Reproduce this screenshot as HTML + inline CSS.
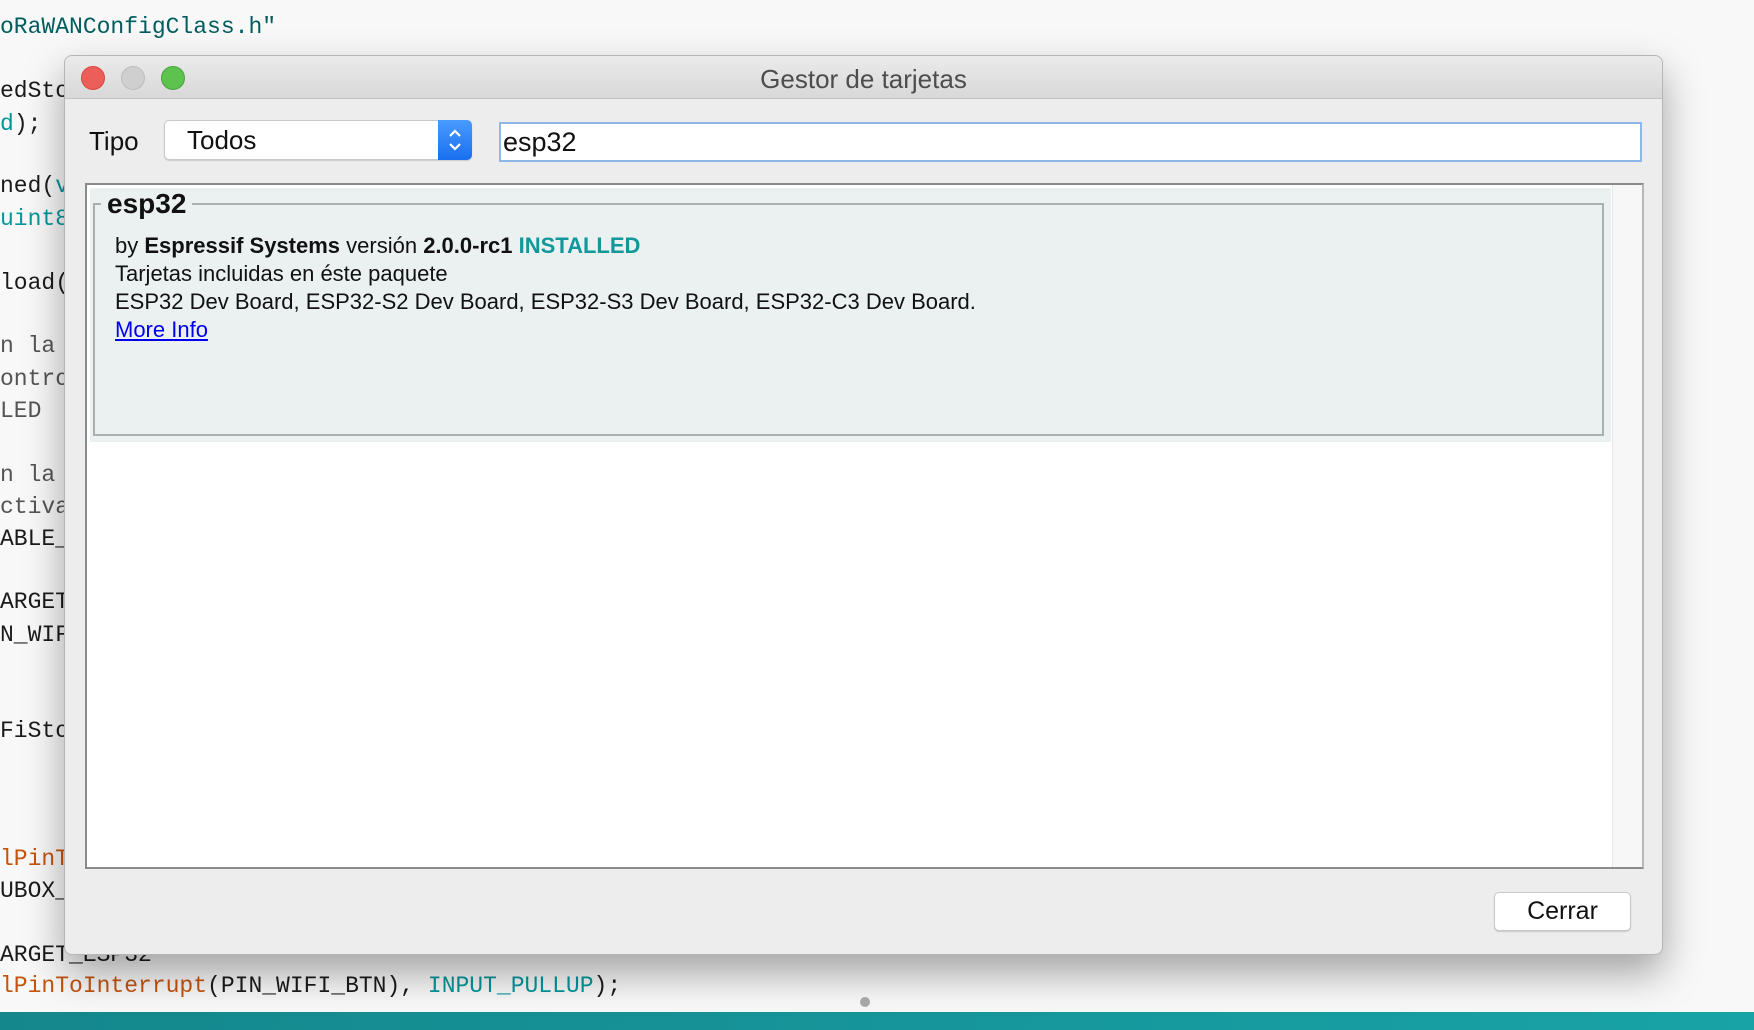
<!DOCTYPE html>
<html><head><meta charset="utf-8"><style>
*{margin:0;padding:0;box-sizing:border-box}
body{width:1754px;height:1030px;overflow:hidden;background:#f8f8f8;position:relative;font-family:"Liberation Sans",sans-serif}
.code{position:absolute;left:0;font-family:"Liberation Mono",monospace;font-size:23px;color:#1b1b1b;white-space:pre;line-height:32px}
.t{color:#005c5f}.o{color:#c4540e}.b{color:#00979c}
.teal{position:absolute;left:0;top:1012px;width:1754px;height:18px;background:linear-gradient(90deg,#14878c,#18a3a7)}
.dlg{position:absolute;left:64px;top:55px;width:1599px;height:900px;background:#ededed;border-radius:8px;border:1px solid #b5b5b5;box-shadow:0 18px 40px rgba(0,0,0,.35)}
.tb{position:absolute;left:0;top:0;right:0;height:43px;background:linear-gradient(#ebebeb,#d8d8d8);border-bottom:1px solid #c4c4c4;border-radius:8px 8px 0 0;text-align:center;font-size:26px;color:#4d4d4d;line-height:46px}
.l{position:absolute;top:10px;width:24px;height:24px;border-radius:50%}
.abs{position:absolute}
.ln{position:absolute;left:114px;font-size:22px;color:#111;white-space:nowrap}
</style></head><body>
<div class="code" style="top:11px"><span class="t">oRaWANConfigClass.h"</span></div>
<div class="code" style="top:75px">edSto</div>
<div class="code" style="top:108px"><span class="b">d</span>);</div>
<div class="code" style="top:170px">ned(<span class="b">v</span></div>
<div class="code" style="top:203px"><span class="b">uint8</span></div>
<div class="code" style="top:267px">load(</div>
<div class="code" style="top:330px;color:#555">n la</div>
<div class="code" style="top:363px;color:#555">ontro</div>
<div class="code" style="top:395px;color:#555">LED</div>
<div class="code" style="top:459px;color:#555">n la</div>
<div class="code" style="top:491px;color:#555">ctiva</div>
<div class="code" style="top:523px">ABLE_</div>
<div class="code" style="top:586px">ARGET</div>
<div class="code" style="top:619px">N_WIF</div>
<div class="code" style="top:715px">FiSto</div>
<div class="code" style="top:843px"><span class="o">lPinT</span></div>
<div class="code" style="top:875px">UBOX_</div>
<div class="code" style="top:939px">ARGET_ESP32</div>
<div class="code" style="top:970px"><span class="o">lPinToInterrupt</span>(PIN_WIFI_BTN), <span class="b">INPUT_PULLUP</span>);</div>
<div class="abs" style="left:860px;top:997px;width:10px;height:10px;border-radius:50%;background:#aaa"></div>
<div class="teal"></div>

<div class="dlg">
 <div class="tb">Gestor de tarjetas
  <div class="l" style="left:16px;background:#ec5f58;border:1px solid #d4473f"></div>
  <div class="l" style="left:56px;background:#cfcfcf;border:1px solid #bdbdbd"></div>
  <div class="l" style="left:96px;background:#5dc24e;border:1px solid #47a43a"></div>
 </div>
 <div class="abs" style="left:24px;top:70px;font-size:26px;color:#111">Tipo</div>
 <div class="abs" style="left:99px;top:64px;width:308px;height:40px;background:#fff;border:1px solid #c9c9c9;border-radius:5px;box-shadow:0 1px 1px rgba(0,0,0,.15)">
  <div class="abs" style="left:22px;top:4px;font-size:26px;color:#111">Todos</div>
  <div class="abs" style="right:-1px;top:-1px;width:34px;height:40px;background:linear-gradient(#4a9bff,#1a6ff0);border-radius:0 5px 5px 0">
   <svg width="34" height="40" viewBox="0 0 34 40"><path d="M12 16l5-5 5 5M12 24l5 5 5-5" fill="none" stroke="#fff" stroke-width="2.2"/></svg>
  </div>
 </div>
 <div class="abs" style="left:434px;top:66px;width:1143px;height:40px;background:#fff;border:2px solid #8fb8ea;">
  <div class="abs" style="left:2px;top:3px;font-size:27px;color:#111">esp32</div>
 </div>
 <div class="abs" style="left:20px;top:127px;width:1559px;height:686px;background:#fff;border:2px solid #8a8a8a;border-right-color:#b8b8b8">
  <div class="abs" style="right:0;top:0;width:30px;height:682px;background:#f7f7f7;border-left:1px solid #e6e6e6"></div>
  <div class="abs" style="left:3px;top:3px;width:1521px;height:254px;background:#ebf0f0">
   <div class="abs" style="left:3px;top:15px;width:1511px;height:233px;border:2px solid #aab0b0"></div>
   <div class="abs" style="left:11px;top:0px;padding:0 6px;background:#ebf0f0;font-size:28px;font-weight:bold;color:#111">esp32</div>
  </div>
  <div class="ln" style="left:28px;top:48px">by <b>Espressif Systems</b> versión <b>2.0.0-rc1</b> <b style="color:#12979b">INSTALLED</b></div>
  <div class="ln" style="left:28px;top:76px">Tarjetas incluidas en éste paquete</div>
  <div class="ln" style="left:28px;top:104px">ESP32 Dev Board, ESP32-S2 Dev Board, ESP32-S3 Dev Board, ESP32-C3 Dev Board.</div>
  <div class="ln" style="left:28px;top:132px;color:#0000ee;text-decoration:underline">More Info</div>
 </div>
 <div class="abs" style="left:1429px;top:836px;width:137px;height:39px;background:#fff;border:1px solid #c8c8c8;border-radius:5px;box-shadow:0 1px 1px rgba(0,0,0,.15);text-align:center;font-size:25px;line-height:37px;color:#111">Cerrar</div>
</div>
</body></html>
